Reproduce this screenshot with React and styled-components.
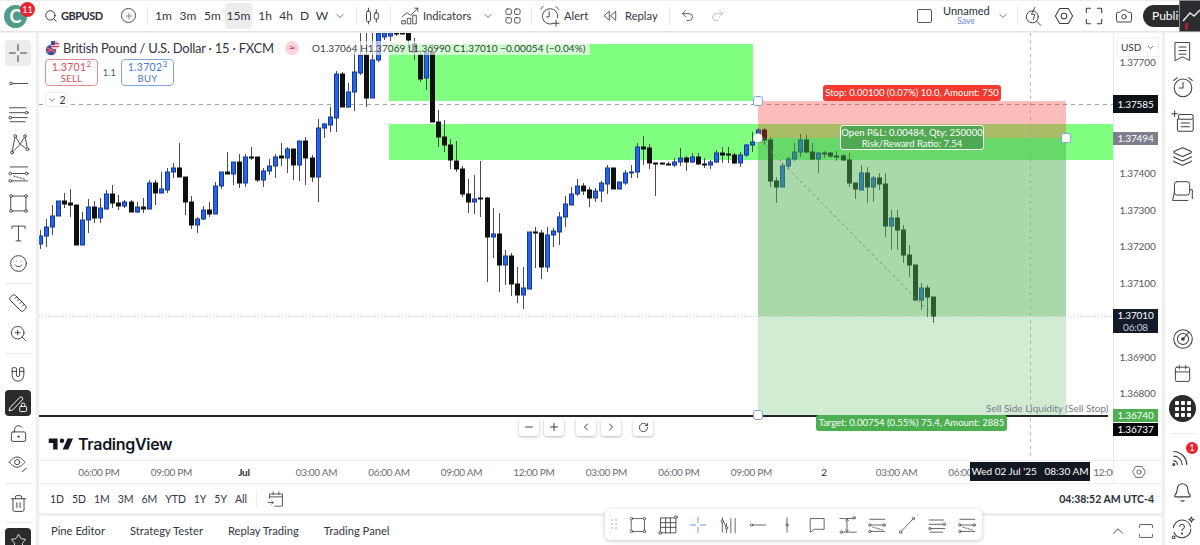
import React from 'react'
import styled, { createGlobalStyle } from 'styled-components'
import {
  Search, Plus, ChevronDown, ChevronUp, ChevronLeft, ChevronRight, Minus, RotateCw, Undo2, Redo2, Camera, Smile, Ruler, ZoomIn, Magnet,
  LockKeyholeOpen, Eye, Trash2, Star, Layers, Bell, Calendar,
} from 'lucide-react'

const GlobalStyle = createGlobalStyle`
  html, body { margin: 0; padding: 0; background: #f0f0f1; }
  * { box-sizing: border-box; }
  body { font-family: Lato, "Noto Sans", Arial, sans-serif; color: #2a2e39; }
`

const INK = '#3b3e47'

const Page = styled.div`
  width: 1200px;
  height: 545px;
  overflow: hidden;
  position: relative;
  display: flex;
  flex-direction: column;
  background: #efeff0;
`

// barra superior
const TopBar = styled.header`
  height: 32px;
  flex: none;
  margin-bottom: 1px;
  background: #fff;
  box-shadow: inset 0 1px 0 #eee;
  border-bottom: 1px solid #e4e4e6;
  display: flex;
  align-items: center;
  position: relative;
`
const AvatarCell = styled.div`
  width: 40px;
  height: 30px;
  position: relative;
  flex: none;
`
const Avatar = styled.div`
  position: absolute;
  left: 4px;
  top: 4px;
  width: 23px;
  height: 23px;
  border-radius: 50%;
  background: #4f9c8c;
  color: #fff;
  font-size: 18px;
  font-weight: 700;
  display: flex;
  align-items: center;
  justify-content: center;
`
const AvatarBadge = styled.span`
  position: absolute;
  left: 20px;
  top: 1px;
  width: 15px;
  height: 15px;
  border-radius: 50%;
  background: #e8232f;
  color: #fff;
  font-size: 9px;
  line-height: 15px;
  text-align: center;
`
const SymbolCell = styled.div`
  width: 72px;
  flex: none;
  display: flex;
  align-items: center;
  gap: 3px;
  padding-left: 4px;
  font-size: 11px;
  font-weight: 700;
  letter-spacing: -0.5px;
  color: #2a2e39;
`
const IconCell = styled.div`
  width: ${p => p.$w}px;
  height: 30px;
  flex: none;
  display: flex;
  align-items: center;
  justify-content: center;
  color: ${p => p.$muted ? '#b4b6bc' : INK};
  svg { flex: none; }
`
const RoundPlus = styled.span`
  width: 15px;
  height: 15px;
  border: 1px solid #4a4d55;
  border-radius: 50%;
  display: flex;
  align-items: center;
  justify-content: center;
`
const BarSep = styled.div`
  width: ${p => p.$w}px;
  flex: none;
  height: 18px;
  display: flex;
  justify-content: center;
  &::before { content: ''; width: 1px; height: 100%; background: #e6e6e8; }
`
const Interval = styled.button`
  width: ${p => p.$w}px;
  height: 26px;
  flex: none;
  margin-left: ${p => p.$ml || 0}px;
  padding: 0;
  border: 0;
  border-radius: 4px;
  background: ${p => p.$on ? '#ececec' : 'transparent'};
  color: #33363f;
  font: 400 12px Lato, sans-serif;
`
const BarLabel = styled.div`
  width: ${p => p.$w}px;
  flex: none;
  margin-left: ${p => p.$ml || 0}px;
  font-size: 11.2px;
  color: #33363f;
  white-space: nowrap;
`
const RightGroup = styled.div`
  margin-left: auto;
  display: flex;
  align-items: center;
  height: 30px;
`
const SaveBox = styled.span`
  width: 15px;
  height: 14px;
  flex: none;
  border: 1px solid #55585f;
  border-radius: 2px;
  margin-right: 11px;
`
const LayoutName = styled.div`
  width: 46px;
  flex: none;
  text-align: center;
  font-size: 11px;
  line-height: 12px;
  color: #2a2e39;
  small { display: block; font-size: 8.5px; line-height: 9px; color: #5b86e5; }
`
const Publish = styled.div`
  width: 57px;
  height: 22px;
  margin-left: 5px;
  flex: none;
  background: #2b2c2e;
  color: #fff;
  border-radius: 11px 0 0 11px;
  font-size: 12px;
  line-height: 22px;
  padding-left: 9px;
  overflow: hidden;
  white-space: nowrap;
`
const Thumb = styled.div`
  position: absolute;
  right: 0;
  top: 0;
  width: 21px;
  height: 32px;
  background: #2a2c30;
  border: 1px solid #8b8d92;
  border-right: 0;
`

const Body = styled.main`
  flex: 1;
  min-height: 0;
  display: flex;
  gap: 3px;
`

// barras laterales
const LeftBar = styled.nav`
  width: 36px;
  flex: none;
  background: #fff;
  padding-top: 5px;
  overflow: hidden;
  display: flex;
  flex-direction: column;
  align-items: center;
`
const Tool = styled.div`
  width: 30px;
  height: 30px;
  flex: none;
  display: flex;
  align-items: center;
  justify-content: center;
  color: ${INK};
`
const ToolFace = styled.span`
  width: 26px;
  height: 26px;
  border-radius: 4px;
  display: flex;
  align-items: center;
  justify-content: center;
  background: ${p => p.$kind === 'dark' ? '#2b2b2d' : p.$kind === 'soft' ? '#ececec' : 'transparent'};
  color: ${p => p.$kind === 'dark' ? '#fff' : INK};
`
const ToolSep = styled.div`
  width: 26px;
  height: ${p => p.$h || 10}px;
  flex: none;
  display: flex;
  align-items: center;
  &::before { content: ''; width: 100%; height: 1px; background: #ececee; }
`
const RightBar = styled.aside`
  width: 35px;
  flex: none;
  background: #fff;
  display: flex;
  flex-direction: column;
  justify-content: space-between;
  align-items: center;
`
const SideGroup = styled.div`
  display: flex;
  flex-direction: column;
  align-items: center;
  margin-top: ${p => p.$mt || 0}px;
`
const SideTool = styled.div`
  width: 35px;
  height: 35px;
  flex: none;
  position: relative;
  display: flex;
  align-items: center;
  justify-content: center;
  color: ${INK};
`
const AppsButton = styled.span`
  width: 27px;
  height: 27px;
  border-radius: 50%;
  background: #2b2b2d;
  display: grid;
  grid-template-columns: repeat(3, 4px);
  gap: 2px;
  align-content: center;
  justify-content: center;
  i { width: 4px; height: 4px; background: #fff; border-radius: 1px; }
`
const SideBadge = styled.span`
  position: absolute;
  right: 2px;
  top: 2px;
  width: 12px;
  height: 12px;
  border-radius: 50%;
  background: #e8232f;
  color: #fff;
  font-size: 8.5px;
  line-height: 12px;
  text-align: center;
`

// zona central
const Center = styled.section`
  width: 1123px;
  flex: none;
  position: relative;
  display: flex;
  flex-direction: column;
  gap: 3px;
`
const Workspace = styled.div`
  height: 480px;
  flex: none;
  background: #fff;
  display: flex;
  flex-direction: column;
`
const ChartRow = styled.div`
  height: 427px;
  flex: none;
  display: flex;
`
const ChartPane = styled.div`
  width: 1074px;
  flex: none;
  position: relative;
  overflow: hidden;
`
const ChartSvg = styled.svg`
  display: block;
  width: 1074px;
  height: 427px;
`
const Legend = styled.div`
  position: absolute;
  left: 0;
  top: 0;
  display: flex;
  align-items: center;
  height: 22px;
  margin-top: 4px;
  padding-left: 6px;
`
const LegendTitle = styled.span`
  width: 211px;
  margin-left: 3px;
  font-size: 13px;
  letter-spacing: -0.25px;
  color: #33363f;
  white-space: nowrap;
`
const LegendMark = styled.span`
  width: 14px;
  height: 14px;
  margin-left: 11px;
  border-radius: 50%;
  background: #fbd3de;
  color: #e0467a;
  font-size: 12px;
  line-height: 13px;
  text-align: center;
`
const Ohlc = styled.span`
  margin-left: 13px;
  padding: 1px 5px 1px 0;
  font-size: 10px;
  letter-spacing: 0.05px;
  color: #3a3d46;
  background: rgba(255, 255, 255, 0.62);
  white-space: nowrap;
`
const TradeRow = styled.div`
  position: absolute;
  left: 6px;
  top: 26px;
  display: flex;
  align-items: center;
`
const TradeButton = styled.div`
  width: 53px;
  height: 27px;
  border: 1px solid ${p => p.$buy ? '#82a4e6' : '#ea8a92'};
  border-radius: 4px;
  background: #fff;
  color: ${p => p.$buy ? '#4a78d8' : '#dd4a58'};
  text-align: center;
  font-size: 10.5px;
  line-height: 12px;
  padding-top: 1px;
  letter-spacing: 0.3px;
  sup { font-size: 8px; line-height: 0; }
  div { font-size: 9.5px; }
`
const Spread = styled.span`
  width: 23px;
  text-align: center;
  font-size: 9.5px;
  color: #555860;
`
const Collapse = styled.div`
  position: absolute;
  left: 6px;
  top: 59px;
  width: 23px;
  height: 15px;
  border: 1px solid #eee;
  border-radius: 2px;
  background: #fff;
  display: flex;
  align-items: center;
  justify-content: center;
  gap: 2px;
  font-size: 10.5px;
  color: #33363f;
`
const TradeTag = styled.div`
  position: absolute;
  left: ${p => p.$x - 39}px;
  top: ${p => p.$y - 33}px;
  width: ${p => p.$w}px;
  height: ${p => p.$h}px;
  background: ${p => p.$bg};
  border: ${p => p.$framed ? '1px solid #fff' : '0'};
  border-radius: 3px;
  color: #fff;
  font-size: 9.5px;
  line-height: ${p => p.$framed ? '11px' : `${p.$h}px`};
  padding-top: ${p => p.$framed ? '1px' : '0'};
  text-align: center;
  white-space: nowrap;
`
const ChartNote = styled.div`
  position: absolute;
  left: 947px;
  top: 369px;
  font-size: 10px;
  color: #787b86;
  white-space: nowrap;
`
const Logo = styled.div`
  position: absolute;
  left: 9px;
  top: 401px;
  display: flex;
  align-items: center;
  gap: 5px;
  font: 600 16px Inter, Lato, sans-serif;
  letter-spacing: -0.3px;
  color: #131722;
`
const ZoomGroup = styled.div`
  position: absolute;
  left: 480px;
  top: 385px;
  display: flex;
`
const ZoomKey = styled.div`
  width: 20px;
  height: 18px;
  margin-left: ${p => p.$ml || 0}px;
  background: #fff;
  border-radius: 3px;
  box-shadow: 0 1px 3px rgba(0, 0, 0, 0.28);
  display: flex;
  align-items: center;
  justify-content: center;
  color: #2a2e39;
`

const PriceAxis = styled.div`
  width: 49px;
  flex: none;
  position: relative;
  border-left: 1px solid #eaeaec;
`
const Currency = styled.div`
  position: absolute;
  left: 3px;
  top: 4px;
  width: 42px;
  height: 20px;
  border: 1px solid #f0f0f2;
  display: flex;
  align-items: center;
  justify-content: space-between;
  padding: 0 3px;
  font-size: 10px;
  color: #33363f;
  background: #fff;
`
const Tick = styled.span`
  position: absolute;
  left: 0;
  top: ${p => p.$y - 33 - 7}px;
  width: 47px;
  text-align: center;
  font-size: 10px;
  letter-spacing: -0.15px;
  line-height: 14px;
  color: #555860;
`
const PriceTag = styled.div`
  position: absolute;
  left: -1px;
  top: ${p => p.$y - 33}px;
  width: 45px;
  height: ${p => p.$h}px;
  background: ${p => p.$bg};
  color: #fff;
  text-align: center;
  font-size: 10px;
  letter-spacing: -0.15px;
  line-height: ${p => p.$h > 20 ? '12px' : `${p.$h}px`};
  span { color: #c9ccd4; display: block; }
`

const TimeRow = styled.div`
  height: 24px;
  flex: none;
  position: relative;
  display: flex;
  border-top: 1px solid #eeeeef;
  border-bottom: 1px solid #eeeeef;
`
const TimeTrack = styled.div`
  width: 1074px;
  flex: none;
  overflow: hidden;
  display: flex;
  align-items: center;
  padding-left: 23.7px;
`
const TimeTick = styled.span`
  width: 72.5px;
  flex: none;
  text-align: center;
  white-space: nowrap;
  font-size: 10px;
  letter-spacing: -0.3px;
  color: ${p => p.$strong ? '#2a2e39' : '#6a6d76'};
  font-weight: ${p => p.$bold ? 700 : 400};
`
const TimeCursor = styled.div`
  position: absolute;
  left: 931px;
  top: 1px;
  width: 120px;
  height: 19px;
  background: #131722;
  color: #fff;
  font-size: 10px;
  line-height: 19px;
  text-align: center;
  white-space: pre;
`
const AxisGear = styled.div`
  flex: 1;
  display: flex;
  align-items: center;
  justify-content: center;
  padding-left: 2px;
  border-left: 1px solid #eaeaec;
  color: ${INK};
`
const RangeBar = styled.div`
  height: 29px;
  flex: none;
  display: flex;
  align-items: center;
  padding: 0 8px 0 11px;
  font-size: 10.5px;
  color: #33363f;
`
const RangeList = styled.div`
  display: flex;
  gap: 7.9px;
`
const RangeDivider = styled.span`
  width: 1px;
  height: 16px;
  margin: 0 9px;
  background: #ececee;
`
const Clock = styled.div`
  margin-left: auto;
  font-size: 10.5px;
  font-weight: 700;
  color: #2a2e39;
`
const BottomPanel = styled.footer`
  flex: 1;
  background: #fff;
  display: flex;
  align-items: center;
  gap: 25px;
  padding: 0 6px 0 12px;
  border-radius: 3px 3px 0 0;
  font-size: 11.2px;
  color: #33363f;
`
const PanelEnd = styled.div`
  margin-left: auto;
  display: flex;
  align-items: center;
  gap: 9px;
  color: ${INK};
`
const FloatingBar = styled.div`
  position: absolute;
  left: 566px;
  bottom: 5px;
  width: 377px;
  height: 31px;
  background: #fff;
  border-radius: 5px;
  box-shadow: 0 1px 4px rgba(0, 0, 0, 0.22);
  display: flex;
  align-items: center;
  padding-left: 18px;
`
const FloatTool = styled.div`
  width: 29.9px;
  flex: none;
  display: flex;
  justify-content: center;
  color: ${p => p.$active ? '#6b8ce8' : INK};
`
const Grip = styled.span`
  position: absolute;
  left: 6px;
  top: 10px;
  display: grid;
  grid-template-columns: repeat(2, 2px);
  gap: 2px;
  i { width: 2px; height: 2px; background: #d2d4d9; }
`

// ---- iconos dibujados a mano ----
const Ic = ({ s = 22, vb = 28, sw = 1.1, children }) => (
  <svg width={s} height={s} viewBox={`0 0 ${vb} ${vb}`} fill="none" stroke="currentColor" strokeWidth={sw} strokeLinecap="round" strokeLinejoin="round">
    {children}
  </svg>
)
const Dot = ({ x, y, r = 1.7 }) => <circle cx={x} cy={y} r={r} fill="#fff" />

const CrossIc = ({ s }) => <Ic s={s} sw={1.2}><path d="M14 4v7M14 17v7M4 14h7M17 14h7" /></Ic>
const LineIc = ({ s }) => <Ic s={s}><path d="M7 14h18" /><Dot x={5} y={14} /></Ic>
const ParallelIc = ({ s }) => <Ic s={s}><path d="M3 7h20M3 13h20M6 19h19M4 24h18" /><Dot x={24} y={13} /><Dot x={4} y={19} /></Ic>
const PatternIc = ({ s }) => (
  <Ic s={s}>
    <path d="M6 25 10 5 16 15 22 5 25 21 16 15 6 25" />
    <Dot x={6} y={25} /><Dot x={10} y={5} /><Dot x={22} y={5} /><Dot x={25} y={21} />
  </Ic>
)
const FibIc = ({ s }) => (
  <Ic s={s}>
    <path d="M4 6h21M7 14h15M4 23h21" /><path d="M8 17l14 4" strokeDasharray="2 2" />
    <Dot x={4} y={14} /><Dot x={24} y={14} /><Dot x={4} y={23} />
  </Ic>
)
const RectIc = ({ s }) => (
  <Ic s={s}><rect x="5" y="5" width="18" height="18" /><Dot x={5} y={5} /><Dot x={23} y={5} /><Dot x={5} y={23} /><Dot x={23} y={23} /></Ic>
)
const TextIc = ({ s }) => <Ic s={s}><path d="M6 8V5h16v3M14 5v18M11 23h6" /></Ic>
const PenLockIc = () => (
  <Ic s={24}>
    <path d="M5 19 16 7.5a2 2 0 0 1 3 3L8 22l-4 1z" /><rect x="16" y="18" width="8" height="6" rx="1" /><path d="M18 18v-2a2 2 0 0 1 4 0v2" />
  </Ic>
)
const EyeLinkIc = () => (
  <Ic s={24}><path d="M4 13s4-6 9-6 9 6 9 6-4 6-9 6-9-6-9-6z" /><circle cx="13" cy="13" r="3" /><path d="M19 24l5-4" /></Ic>
)
const SparkSearchIc = () => (
  <Ic s={24}><circle cx="12" cy="15" r="7" /><path d="M17 20l5 5" /><path d="M15 4l-4 8h4l-2 6" /></Ic>
)
const HexIc = ({ s = 24 }) => <Ic s={s} sw={1.3}><path d="M8.5 4.5h11l5.5 9.5-5.5 9.5h-11L3 14z" /><circle cx="14" cy="14" r="3.6" /></Ic>
const CornersIc = () => <Ic s={24} sw={1.3}><path d="M5 10V6a1 1 0 0 1 1-1h4M18 5h4a1 1 0 0 1 1 1v4M23 18v4a1 1 0 0 1-1 1h-4M10 23H6a1 1 0 0 1-1-1v-4" /></Ic>
const CandleIc = () => (
  <Ic s={22} sw={1.2}><rect x="7" y="8" width="5" height="13" rx="1.5" /><path d="M9.5 4v4M9.5 21v3" /><rect x="17" y="10" width="5" height="8" rx="1.5" /><path d="M19.5 6v4M19.5 18v4" /></Ic>
)
const IndicatorsIc = () => (
  <Ic s={22}><path d="M4 15l6-5 5 3 9-9" /><path d="M20 4h4v4" /><rect x="4" y="20" width="4" height="4" /><rect x="11" y="17" width="4" height="7" /><rect x="18" y="13" width="4" height="11" /></Ic>
)
const LayoutIc = () => (
  <Ic s={22}><rect x="5" y="5" width="7" height="7" rx="2" /><rect x="16" y="5" width="7" height="7" rx="2" /><rect x="5" y="16" width="7" height="7" rx="2" /><rect x="16" y="16" width="7" height="7" rx="2" /></Ic>
)
const AlertIc = () => (
  <Ic s={24}><path d="M17 23a9 9 0 1 1 6-7" /><path d="M13 9v6h-3M3 6l3-3M21 3l3 3M21 19v7M17.5 22.5h7" /></Ic>
)
const ReplayIc = () => <Ic s={20} sw={1.2}><path d="M13 8v12L6 14zM22 8v12l-7-6z" /></Ic>
const WatchIc = () => (
  <Ic s={25}><path d="M6 4h16v20l-8-4-8 4z" /><path d="M10 9h8M10 13h8M10 17h8" /></Ic>
)
const AlarmIc = () => (
  <Ic s={26}><circle cx="14" cy="15" r="9.5" /><path d="M14 9v6h-4M4 7l4-3M24 7l-4-3" /></Ic>
)
const NotesIc = () => (
  <Ic s={26}><rect x="9" y="6" width="16" height="5" rx="2" /><path d="M9 11h-1v11a2 2 0 0 0 2 2h13a2 2 0 0 0 2-2V11M12 15h9M12 19h9M5 2v6M2 5h6" /></Ic>
)
const ChatIc = () => (
  <Ic s={25}><rect x="5" y="3" width="17" height="15" rx="3" /><path d="M5 14 3 24h17M22 12h3v10" /></Ic>
)
const RadarIc = () => (
  <Ic s={26}><circle cx="14" cy="14" r="10" /><circle cx="14" cy="14" r="6" /><path d="M14 14l6-7" /><circle cx="14" cy="14" r="1.4" fill="currentColor" /></Ic>
)
const SignalIc = () => (
  <Ic s={26} sw={1.3}><path d="M4 7c7 0 14 6 14 14M4 12c5 0 9 4 9 9M4 17c2 0 4 2 4 4" /><circle cx="4" cy="21" r="1" /></Ic>
)
const HelpIc = () => (
  <Ic s={26}><circle cx="13" cy="15" r="9.5" strokeDasharray="26 5" /><path d="M10.5 12.5a2.5 2.5 0 1 1 3.8 2.2c-1 .6-1.3 1.2-1.3 2.3" /><circle cx="13" cy="20" r=".6" /><path d="M23 2l.8 2.2L26 5l-2.2.8L23 8l-.8-2.2L20 5l2.2-.8z" /><circle cx="4" cy="24" r="1.5" /></Ic>
)
const CalendarGoIc = () => (
  <Ic s={20}><path d="M5 13V7h18v17H12M5 11h18M10 4v4M18 4v4M3 19h7M8 17l2 2-2 2" /></Ic>
)
const ExpandIc = () => <Ic s={20} sw={1.2}><path d="M5 9V6a1 1 0 0 1 1-1h16a1 1 0 0 1 1 1v3M5 19v3a1 1 0 0 0 1 1h16a1 1 0 0 0 1-1v-3" /></Ic>
const GridFibIc = ({ s }) => (
  <Ic s={s}><path d="M5 5h19v19H5zM5 11h19M5 17h19M11 5v19M17 5v19" /><Dot x={24} y={4} /><Dot x={4} y={24} /></Ic>
)
const BarsIc = ({ s }) => (
  <Ic s={s}><path d="M6 4v20M12 12v13M18 5v20M24 5v20M6 6l6 12" /><Dot x={6} y={9} /><Dot x={12} y={18} /></Ic>
)
const VLineIc = ({ s }) => <Ic s={s}><path d="M14 4v20" /><Dot x={14} y={14} /></Ic>
const CommentIc = ({ s }) => <Ic s={s}><path d="M5 5h19v15H10l-5 4z" /></Ic>
const PriceRangeIc = ({ s }) => (
  <Ic s={s}><path d="M4 5h18M9 24h18M14 5v19" /><path d="M12 8l2-2 2 2M12 21l2 2 2-2" /><Dot x={24} y={4} /><Dot x={6} y={24} /></Ic>
)
const TrendIc = ({ s }) => <Ic s={s}><path d="M6 23 22 6" /><Dot x={5} y={24} /><Dot x={23} y={5} /></Ic>

const FlagIc = () => (
  <svg width="15" height="16" viewBox="0 0 15 16">
    <circle cx="6" cy="10" r="5.2" fill="#3b4f9e" />
    <path d="M1.5 7.5 10.5 12.5M1.5 12.5 10.5 7.5" stroke="#e8566a" strokeWidth="1.6" />
    <circle cx="10" cy="5" r="4.4" fill="#f3c7cf" />
    <path d="M6 3.5h8M6 6.5h8" stroke="#d8384e" strokeWidth="1.2" />
    <rect x="6" y="1" width="4" height="4" fill="#3b4f9e" />
  </svg>
)
const TvMark = () => (
  <svg width="25" height="14" viewBox="1 5 34 17" fill="#131722">
    <path d="M14 6H2v6h6v9h6V6Zm14 15h-7l6.5-15h7.5l-6.5 15Z" />
    <circle cx="20" cy="9" r="3" />
  </svg>
)

// ---- datos del grafico: [maximo, cuerpo arriba, cuerpo abajo, minimo, alcista] en px de la pagina ----
const U = 1
const D = 0
const CANDLES = [
  [230, 236, 244, 249, U], [219, 227, 236, 247, U], [205, 216, 227, 235, U], [201, 201, 216, 216, U], [193, 201, 204, 208, D],
  [189, 203, 205, 217, D], [205, 205, 245, 245, D], [212, 220, 245, 245, U], [199, 207, 220, 233, U], [201, 207, 218, 223, D],
  [198, 208, 218, 223, U], [190, 194, 209, 209, U], [185, 194, 203, 208, D], [195, 203, 206, 210, D], [200, 202, 206, 208, U],
  [200, 202, 212, 212, D], [202, 207, 212, 213, U], [198, 207, 209, 213, D], [180, 183, 209, 209, U], [180, 183, 193, 205, D],
  [172, 189, 193, 193, U], [168, 172, 190, 193, U], [163, 168, 172, 178, U], [143, 168, 177, 177, D], [177, 177, 202, 215, D],
  [196, 202, 225, 229, D], [217, 219, 225, 233, U], [206, 210, 219, 220, U], [202, 210, 214, 217, D], [182, 186, 214, 214, U],
  [172, 172, 186, 189, U], [152, 172, 174, 174, D], [162, 162, 174, 185, U], [154, 162, 183, 188, D], [154, 157, 183, 187, U],
  [147, 157, 158, 160, D], [157, 157, 180, 182, D], [168, 171, 180, 187, U], [159, 166, 171, 175, U], [154, 157, 166, 178, U],
  [143, 156, 158, 166, D], [147, 149, 158, 173, U], [149, 149, 165, 180, D], [141, 141, 165, 181, U], [137, 141, 158, 185, D],
  [155, 158, 177, 182, D], [119, 128, 177, 202, U], [123, 124, 128, 138, U], [107, 117, 125, 132, U], [71, 74, 118, 132, U],
  [72, 74, 107, 107, D], [83, 92, 107, 108, U], [50, 72, 92, 111, U], [33, 55, 73, 75, U], [33, 55, 98, 107, D],
  [33, 60, 98, 98, U], [33, 33, 60, 62, U], [33, 33, 37, 40, U], [33, 33, 36, 41, U], [33, 33, 34, 36, D],
  [33, 33, 34, 34, D], [33, 33, 40, 48, D], [38, 44, 52, 60, D], [52, 55, 79, 82, D], [52, 52, 78, 90, U],
  [44, 52, 122, 122, D], [110, 122, 137, 147, D], [120, 137, 145, 152, D], [139, 145, 160, 169, D], [141, 161, 169, 172, D],
  [166, 169, 194, 197, D], [179, 194, 202, 213, D], [175, 199, 202, 214, U], [161, 198, 199, 217, D], [197, 198, 237, 282, D],
  [208, 234, 237, 258, U], [213, 234, 265, 292, D], [250, 256, 265, 285, U], [253, 256, 284, 296, D], [267, 284, 295, 303, D],
  [267, 288, 295, 309, U], [232, 232, 289, 289, U], [227, 232, 233, 268, D], [230, 233, 267, 279, D], [227, 235, 267, 272, U],
  [228, 231, 235, 247, U], [212, 217, 232, 245, U], [196, 204, 217, 227, U], [187, 194, 205, 205, U], [179, 186, 194, 196, U],
  [183, 186, 191, 195, D], [187, 190, 198, 207, D], [188, 191, 198, 202, U], [181, 183, 191, 202, U], [165, 168, 184, 194, U],
  [168, 168, 189, 189, D], [182, 182, 189, 189, U], [170, 173, 183, 185, U], [165, 172, 173, 178, U], [143, 147, 172, 178, U],
  [136, 147, 149, 165, D], [144, 148, 163, 169, D], [163, 163, 164, 196, D], [163, 163, 164, 165, D], [162, 164, 165, 165, D],
  [158, 162, 165, 167, U], [148, 158, 162, 166, U], [156, 158, 162, 171, D], [153, 157, 162, 163, U], [153, 157, 164, 165, D],
  [158, 164, 165, 168, D], [160, 162, 165, 169, U], [150, 153, 162, 163, U], [147, 153, 155, 163, D], [147, 154, 155, 163, D],
  [153, 155, 163, 164, D], [152, 155, 163, 167, U], [144, 145, 155, 157, U], [132, 142, 145, 152, U], [128, 130, 142, 143, U],
  [128, 130, 140, 145, D], [137, 140, 181, 187, D], [177, 181, 187, 203, D], [163, 166, 187, 187, U], [157, 159, 166, 169, U],
  [143, 152, 159, 161, U], [134, 140, 152, 157, U], [135, 140, 152, 153, D], [143, 152, 159, 160, D], [152, 153, 159, 173, U],
  [151, 153, 154, 158, D], [152, 153, 156, 158, D], [151, 156, 157, 161, D], [154, 156, 160, 161, D], [153, 160, 183, 187, D],
  [183, 183, 189, 199, D], [165, 173, 190, 190, U], [167, 173, 187, 203, D], [176, 178, 187, 202, U], [173, 178, 184, 190, D],
  [173, 184, 226, 237, D], [210, 218, 226, 250, U], [210, 218, 230, 250, D], [225, 230, 255, 263, D], [245, 255, 265, 277, D],
  [265, 265, 300, 301, D], [283, 288, 300, 310, U], [285, 288, 297, 317, D], [297, 297, 316, 323, D],
]
const candleX = i => 40 + i * 6.034

const Candle = ({ x, hi, top, bot, lo, up }) => (
  <g>
    <line x1={x} x2={x} y1={hi} y2={lo} stroke="#4c4c50" strokeWidth="1" />
    <rect
      x={x - 2}
      y={top}
      width="4"
      height={Math.max(bot - top, 1)}
      fill={up ? '#2962e8' : '#101012'}
      stroke={up ? '#123a9a' : '#101012'}
      strokeWidth="1"
    />
  </g>
)

const Handle = ({ x, y }) => <rect x={x - 4.5} y={y - 4.5} width="9" height="9" rx="2" fill="#fff" stroke="#7fa0e8" strokeWidth="1" />

const Chart = () => (
  <ChartSvg viewBox="39 33 1074 427" aria-hidden="true">
    <rect x="389" y="44" width="364" height="57" fill="#80ff80" />
    <rect x="389" y="124" width="724" height="36" fill="#80ff80" />
    <line x1="39" x2="1113" y1="104.5" y2="104.5" stroke="#a2a2a6" strokeDasharray="4 4" />
    <line x1="39" x2="1113" y1="316.5" y2="316.5" stroke="#c8c8cc" strokeDasharray="1 2" />
    <line x1="1030.5" x2="1030.5" y1="33" y2="460" stroke="#b8b8bc" strokeDasharray="3 4" />
    {CANDLES.map(([hi, top, bot, lo, up], i) => (
      <Candle key={i} x={Math.round(candleX(i)) + 0.5} hi={hi} top={top} bot={bot} lo={lo} up={up} />
    ))}
    <rect x="758" y="101" width="308" height="37" fill="rgba(244,67,54,0.35)" />
    <rect x="758" y="138" width="308" height="278" fill="rgba(76,175,80,0.25)" />
    <rect x="758" y="138" width="308" height="178" fill="rgba(76,175,80,0.3)" />
    <line x1="758" y1="138" x2="933" y2="316" stroke="#7e8a80" strokeDasharray="3 3" />
    <rect x="39" y="415" width="1069" height="2" fill="#26262a" />
    <Handle x={758} y={101} />
    <circle cx="758" cy="138" r="4.5" fill="#fff" />
    <Handle x={1066} y={138} />
    <Handle x={758} y={415} />
  </ChartSvg>
)

const INTERVALS = [
  ['1m', 25, 2], ['3m', 24], ['5m', 25], ['15m', 27], ['1h', 26], ['4h', 16], ['D', 21], ['W', 14],
]
const TICKS = [
  [62, '1.37700'], [173, '1.37400'], [209.5, '1.37300'], [246, '1.37200'], [283, '1.37100'], [356.5, '1.36900'], [393, '1.36800'],
]
// el hueco vacio queda debajo de la etiqueta del cursor
const TIMES = [
  '06:00 PM', '09:00 PM', 'Jul', '03:00 AM', '06:00 AM', '09:00 AM', '12:00 PM', '03:00 PM', '06:00 PM', '09:00 PM', '2', '03:00 AM', '06:00 AM', '', '12:00 PM',
]
const RANGES = ['1D', '5D', '1M', '3M', '6M', 'YTD', '1Y', '5Y', 'All']
const PANELS = ['Pine Editor', 'Strategy Tester', 'Replay Trading', 'Trading Panel']

const App = () => (
  <Page>
    <GlobalStyle />
    <TopBar>
      <AvatarCell>
        <Avatar>C</Avatar>
        <AvatarBadge>11</AvatarBadge>
      </AvatarCell>
      <SymbolCell><Search size={14} strokeWidth={1.6} />GBPUSD</SymbolCell>
      <IconCell $w={33}><RoundPlus><Plus size={10} strokeWidth={1.4} /></RoundPlus></IconCell>
      <BarSep $w={4} />
      {INTERVALS.map(([t, w, ml]) => (
        <Interval key={t} $w={w} $ml={ml} $on={t === '15m'}>{t}</Interval>
      ))}
      <IconCell $w={22}><ChevronDown size={12} strokeWidth={1.5} /></IconCell>
      <BarSep $w={10} />
      <IconCell $w={22}><CandleIc /></IconCell>
      <BarSep $w={14} />
      <IconCell $w={26}><IndicatorsIc /></IconCell>
      <BarLabel $w={48}>Indicators</BarLabel>
      <IconCell $w={34}><ChevronDown size={12} strokeWidth={1.5} /></IconCell>
      <IconCell $w={16}><LayoutIc /></IconCell>
      <BarSep $w={20} />
      <IconCell $w={18}><AlertIc /></IconCell>
      <BarLabel $w={31} $ml={5}>Alert</BarLabel>
      <IconCell $w={30}><ReplayIc /></IconCell>
      <BarLabel $w={32}>Replay</BarLabel>
      <BarSep $w={24} />
      <IconCell $w={12}><Undo2 size={15} strokeWidth={1.3} /></IconCell>
      <IconCell $w={48} $muted><Redo2 size={15} strokeWidth={1.3} /></IconCell>
      <RightGroup>
        <SaveBox />
        <LayoutName>Unnamed<small>Save</small></LayoutName>
        <IconCell $w={28}><ChevronDown size={12} strokeWidth={1.5} /></IconCell>
        <BarSep $w={1} />
        <IconCell $w={32}><SparkSearchIc /></IconCell>
        <IconCell $w={28}><HexIc s={22} /></IconCell>
        <IconCell $w={32}><CornersIc /></IconCell>
        <IconCell $w={28}><Camera size={18} strokeWidth={1.3} /></IconCell>
        <Publish>Publish</Publish>
      </RightGroup>
      <Thumb>
        <svg width="20" height="30" viewBox="0 0 20 30" fill="none">
          <path d="M3 20 10 12 14 15 20 9" stroke="#e8e8ea" strokeWidth="1.5" />
          <rect x="5" y="22" width="3" height="7" fill="#a0262c" />
        </svg>
      </Thumb>
    </TopBar>

    <Body>
      <LeftBar>
        <Tool><ToolFace $kind="soft"><CrossIc s={24} /></ToolFace></Tool>
        <Tool><LineIc s={23} /></Tool>
        <Tool><ParallelIc s={23} /></Tool>
        <Tool><PatternIc s={23} /></Tool>
        <Tool><FibIc s={23} /></Tool>
        <Tool><RectIc s={23} /></Tool>
        <Tool><TextIc s={23} /></Tool>
        <Tool><Smile size={19} strokeWidth={1.2} /></Tool>
        <ToolSep />
        <Tool><Ruler size={20} strokeWidth={1.2} /></Tool>
        <Tool><ZoomIn size={19} strokeWidth={1.2} /></Tool>
        <ToolSep />
        <Tool><Magnet size={18} strokeWidth={1.2} style={{ transform: 'rotate(135deg)' }} /></Tool>
        <Tool><ToolFace $kind="dark"><PenLockIc /></ToolFace></Tool>
        <Tool><LockKeyholeOpen size={19} strokeWidth={1.2} /></Tool>
        <Tool><EyeLinkIc /></Tool>
        <ToolSep />
        <Tool><Trash2 size={19} strokeWidth={1.2} /></Tool>
        <ToolSep $h={8} />
        <Tool><ToolFace $kind="dark"><Star size={17} strokeWidth={1.2} /></ToolFace></Tool>
      </LeftBar>

      <Center>
        <Workspace>
          <ChartRow>
            <ChartPane>
              <Chart />
              <Legend>
                <FlagIc />
                <LegendTitle>British Pound / U.S. Dollar · 15 · FXCM</LegendTitle>
                <LegendMark>≈</LegendMark>
                <Ohlc>O1.37064 H1.37069 L1.36990 C1.37010 −0.00054 (−0.04%)</Ohlc>
              </Legend>
              <TradeRow>
                <TradeButton>1.3701<sup>2</sup><div>SELL</div></TradeButton>
                <Spread>1.1</Spread>
                <TradeButton $buy>1.3702<sup>3</sup><div>BUY</div></TradeButton>
              </TradeRow>
              <Collapse><ChevronDown size={10} strokeWidth={1.6} />2</Collapse>
              <TradeTag $x={823} $y={85} $w={178} $h={16} $bg="#f23a30">Stop: 0.00100 (0.07%) 10.0, Amount: 750</TradeTag>
              <TradeTag $x={840} $y={125} $w={144} $h={25} $bg="rgba(76,165,80,0.92)" $framed>
                Open P&amp;L: 0.00484, Qty: 250000<br />Risk/Reward Ratio: 7.54
              </TradeTag>
              <TradeTag $x={816} $y={415} $w={191} $h={16} $bg="#4caf50">Target: 0.00754 (0.55%) 75.4, Amount: 2885</TradeTag>
              <ChartNote>Sell Side Liquidity (Sell Stop)</ChartNote>
              <Logo><TvMark />TradingView</Logo>
              <ZoomGroup>
                <ZoomKey><Minus size={12} strokeWidth={1.8} /></ZoomKey>
                <ZoomKey $ml={5}><Plus size={12} strokeWidth={1.8} /></ZoomKey>
                <ZoomKey $ml={12}><ChevronLeft size={12} strokeWidth={1.8} /></ZoomKey>
                <ZoomKey $ml={5}><ChevronRight size={12} strokeWidth={1.8} /></ZoomKey>
                <ZoomKey $ml={12}><RotateCw size={11} strokeWidth={1.8} /></ZoomKey>
              </ZoomGroup>
            </ChartPane>
            <PriceAxis>
              {TICKS.map(([y, t]) => <Tick key={t} $y={y}>{t}</Tick>)}
              <Currency>USD<ChevronDown size={9} strokeWidth={2} /></Currency>
              <PriceTag $y={95} $h={18} $bg="#0d1118">1.37585</PriceTag>
              <PriceTag $y={132} $h={13} $bg="#7d7f8c">1.37494</PriceTag>
              <PriceTag $y={309} $h={24} $bg="#131a2a">1.37010<span>06:08</span></PriceTag>
              <PriceTag $y={409} $h={13} $bg="#4caf50">1.36740</PriceTag>
              <PriceTag $y={423} $h={13} $bg="#050507">1.36737</PriceTag>
            </PriceAxis>
          </ChartRow>
          <TimeRow>
            <TimeTrack>
              {TIMES.map((t, i) => <TimeTick key={i} $strong={t === 'Jul' || t === '2'} $bold={t === 'Jul'}>{t}</TimeTick>)}
            </TimeTrack>
            <TimeCursor>{"Wed 02 Jul '25   08:30 AM"}</TimeCursor>
            <AxisGear><HexIc s={16} /></AxisGear>
          </TimeRow>
          <RangeBar>
            <RangeList>{RANGES.map(r => <span key={r}>{r}</span>)}</RangeList>
            <RangeDivider />
            <CalendarGoIc />
            <Clock>04:38:52 AM UTC-4</Clock>
          </RangeBar>
        </Workspace>
        <BottomPanel>
          {PANELS.map(p => <span key={p}>{p}</span>)}
          <PanelEnd>
            <ChevronUp size={18} strokeWidth={1.2} />
            <ExpandIc />
          </PanelEnd>
        </BottomPanel>
        <FloatingBar>
          <Grip><i /><i /><i /><i /><i /><i /></Grip>
          <FloatTool><RectIc s={20} /></FloatTool>
          <FloatTool><GridFibIc s={22} /></FloatTool>
          <FloatTool $active><CrossIc s={22} /></FloatTool>
          <FloatTool><BarsIc s={20} /></FloatTool>
          <FloatTool><LineIc s={20} /></FloatTool>
          <FloatTool><VLineIc s={20} /></FloatTool>
          <FloatTool><CommentIc s={20} /></FloatTool>
          <FloatTool><PriceRangeIc s={20} /></FloatTool>
          <FloatTool><FibIc s={20} /></FloatTool>
          <FloatTool><TrendIc s={20} /></FloatTool>
          <FloatTool><ParallelIc s={20} /></FloatTool>
          <FloatTool><FibIc s={20} /></FloatTool>
        </FloatingBar>
      </Center>

      <RightBar>
        <SideGroup $mt={1}>
          <SideTool><WatchIc /></SideTool>
          <SideTool><AlarmIc /></SideTool>
          <SideTool><NotesIc /></SideTool>
          <SideTool><Layers size={21} strokeWidth={1.2} /></SideTool>
          <SideTool><ChatIc /></SideTool>
        </SideGroup>
        <SideGroup>
          <SideTool><RadarIc /></SideTool>
          <SideTool><Calendar size={19} strokeWidth={1.2} /></SideTool>
          <SideTool><AppsButton>{Array.from({ length: 9 }, (_, i) => <i key={i} />)}</AppsButton></SideTool>
          <ToolSep $h={14} />
          <SideTool><SignalIc /><SideBadge>1</SideBadge></SideTool>
          <SideTool><Bell size={21} strokeWidth={1.2} /></SideTool>
          <SideTool><HelpIc /></SideTool>
        </SideGroup>
      </RightBar>
    </Body>
  </Page>
)

export default App
